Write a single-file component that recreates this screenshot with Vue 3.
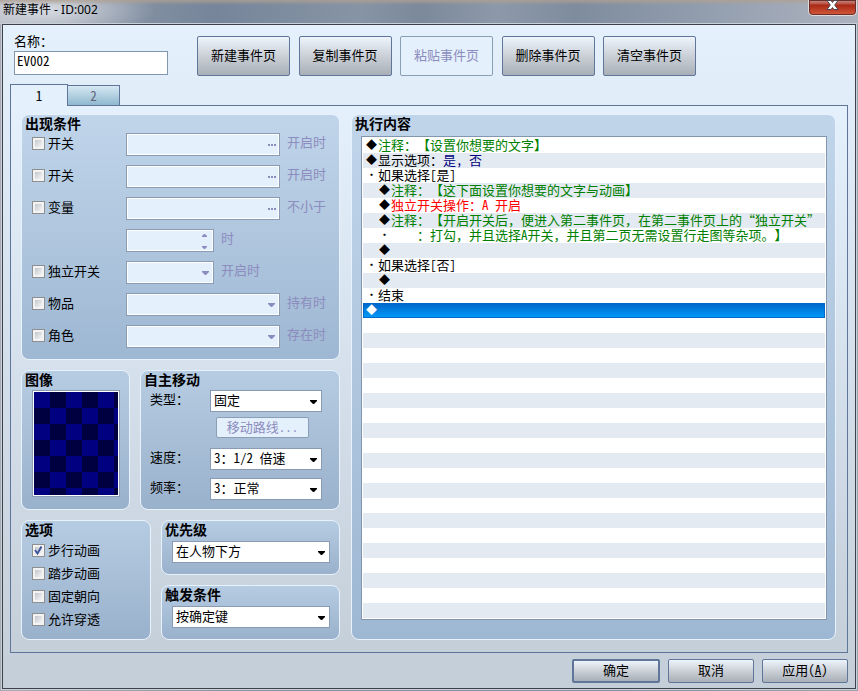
<script setup>
import { reactive, ref } from 'vue'

const eventName = ref('EV002')
const pageActions = [
  { label: '新建事件页' },
  { label: '复制事件页' },
  { label: '粘贴事件页', disabled: true },
  { label: '删除事件页' },
  { label: '清空事件页' },
]
const tabs = [1, 2]
const activeTab = ref(1)

const conditions = reactive([
  { id: 'switch-1', label: '开关', kind: 'picker', suffix: '开启时', on: false },
  { id: 'switch-2', label: '开关', kind: 'picker', suffix: '开启时', on: false },
  { id: 'variable', label: '变量', kind: 'picker', suffix: '不小于', on: false },
  { id: 'variable-value', kind: 'spin', suffix: '时', short: true },
  { id: 'self-switch', label: '独立开关', kind: 'select', suffix: '开启时', short: true, on: false },
  { id: 'item', label: '物品', kind: 'select', suffix: '持有时', on: false },
  { id: 'actor', label: '角色', kind: 'select', suffix: '存在时', on: false },
])

const options = reactive([
  { id: 'walk', label: '步行动画', on: true },
  { id: 'step', label: '踏步动画', on: false },
  { id: 'fix', label: '固定朝向', on: false },
  { id: 'through', label: '允许穿透', on: false },
])

const commands = [
  { mark: '◆', depth: 0, parts: [['green', '注释：【设置你想要的文字】']] },
  { mark: '◆', depth: 0, parts: [['black', '显示选项：'], ['navy half', '是, 否']] },
  { mark: '・', depth: 0, parts: [['half', '如果选择[是]']] },
  { mark: '◆', depth: 1, parts: [['green', '注释：【这下面设置你想要的文字与动画】']] },
  { mark: '◆', depth: 1, parts: [['red', '独立开关操作：'], ['red half', 'A 开启']] },
  { mark: '◆', depth: 1, parts: [['green', '注释：【开启开关后，便进入第二事件页，在第二事件页上的“独立开关”']] },
  { mark: '・', depth: 1, parts: [['green', '\u3000\u3000：打勾，并且选择'], ['green half', 'A'], ['green', '开关，并且第二页无需设置行走图等杂项。】']] },
  { mark: '◆', depth: 1, parts: [] },
  { mark: '・', depth: 0, parts: [['half', '如果选择[否]']] },
  { mark: '◆', depth: 1, parts: [] },
  { mark: '・', depth: 0, parts: [['black', '结束']] },
  { mark: '◆', depth: 0, parts: [] },
]
const selected = ref(11)
</script>

<template>
  <div class="window" lang="zh-CN">
    <header class="titlebar">
      <h1>新建事件 - ID:002</h1>
      <button class="close" type="button" aria-label="关闭">
        <svg width="13" height="11" viewBox="0 0 13 11">
          <path d="M1 0.5H5L6.500 2.500L8 0.5H12L8.700 5L12 9.500H8L6.500 7.500L5 9.500H1L4.300 5Z" fill="#fff" stroke="#4d4350" stroke-width="1" />
        </svg>
      </button>
    </header>

    <main class="client">
      <div class="top">
        <div class="name">
          <label for="event-name">名称：</label>
          <input id="event-name" v-model="eventName" type="text" />
        </div>
        <div class="actions">
          <button v-for="a in pageActions" :key="a.label" type="button" class="btn tall" :disabled="a.disabled">{{ a.label }}</button>
        </div>
      </div>

      <div class="tabs" role="tablist">
        <button
          v-for="t in tabs" :key="t" type="button" role="tab" class="tab"
          :class="{ active: t === activeTab }" :aria-selected="t === activeTab" @click="activeTab = t"
        >{{ t }}</button>
      </div>

      <div class="page">
        <div class="left">
          <section class="group conditions">
            <h2>出现条件</h2>
            <div class="rows">
              <div v-for="c in conditions" :key="c.id" class="row">
                <label v-if="c.label" class="check">
                  <span class="box">
                    <input v-model="c.on" type="checkbox" />
                    <svg v-if="c.on" width="13" height="13" viewBox="0 0 13 13"><path d="M3 6L5.5 9.5L9.5 2.5" fill="none" stroke="#3f569c" stroke-width="2" /></svg>
                  </span>
                  <span class="caption">{{ c.label }}</span>
                </label>
                <span v-else></span>
                <div class="value">
                  <span class="field" :class="{ short: c.short }">
                    <select v-if="c.kind === 'select'" :aria-label="c.label" disabled></select>
                    <input v-else type="text" :aria-label="c.label || '变量值'" disabled />
                    <svg v-if="c.kind === 'select'" class="arrow" width="7" height="4" viewBox="0 0 7 4"><path d="M0 0H7V1L4 4H3L0 1Z" /></svg>
                    <svg v-else-if="c.kind === 'picker'" class="dots" width="8" height="2" viewBox="0 0 8 2"><path d="M0 0H2V2H0ZM3 0H5V2H3ZM6 0H8V2H6Z" /></svg>
                    <svg v-else class="spin" width="5" height="15" viewBox="0 0 5 15"><path d="M0 3V2L2 0H3L5 2V3ZM0 12H5V13L3 15H2L0 13Z" /></svg>
                  </span>
                  <span class="suffix">{{ c.suffix }}</span>
                </div>
              </div>
            </div>
          </section>

          <div class="pair">
            <section class="group image">
              <h2>图像</h2>
              <button type="button" class="sprite" aria-label="图像"></button>
            </section>
            <section class="group movement">
              <h2>自主移动</h2>
              <div class="move-grid">
                <label for="move-type">类型：</label>
                <span class="field">
                  <select id="move-type"><option>固定</option></select>
                  <svg class="arrow" width="7" height="4" viewBox="0 0 7 4"><path d="M0 0H7V1L4 4H3L0 1Z" /></svg>
                </span>
                <button type="button" class="btn route" disabled>移动路线...</button>
                <label for="move-speed">速度：</label>
                <span class="field">
                  <select id="move-speed"><option>3：1/2 倍速</option></select>
                  <svg class="arrow" width="7" height="4" viewBox="0 0 7 4"><path d="M0 0H7V1L4 4H3L0 1Z" /></svg>
                </span>
                <label for="move-freq">频率：</label>
                <span class="field">
                  <select id="move-freq"><option>3：正常</option></select>
                  <svg class="arrow" width="7" height="4" viewBox="0 0 7 4"><path d="M0 0H7V1L4 4H3L0 1Z" /></svg>
                </span>
              </div>
            </section>
          </div>

          <div class="pair">
            <section class="group options">
              <h2>选项</h2>
              <div class="option-list">
                <label v-for="o in options" :key="o.id" class="check">
                  <span class="box">
                    <input v-model="o.on" type="checkbox" />
                    <svg v-if="o.on" width="13" height="13" viewBox="0 0 13 13"><path d="M3 6L5.5 9.5L9.5 2.5" fill="none" stroke="#3f569c" stroke-width="2" /></svg>
                  </span>
                  <span class="caption">{{ o.label }}</span>
                </label>
              </div>
            </section>
            <div class="stack">
              <section class="group single">
                <h2 id="priority">优先级</h2>
                <span class="field">
                  <select aria-labelledby="priority"><option>在人物下方</option></select>
                  <svg class="arrow" width="7" height="4" viewBox="0 0 7 4"><path d="M0 0H7V1L4 4H3L0 1Z" /></svg>
                </span>
              </section>
              <section class="group single">
                <h2 id="trigger">触发条件</h2>
                <span class="field">
                  <select aria-labelledby="trigger"><option>按确定键</option></select>
                  <svg class="arrow" width="7" height="4" viewBox="0 0 7 4"><path d="M0 0H7V1L4 4H3L0 1Z" /></svg>
                </span>
              </section>
            </div>
          </div>
        </div>

        <section class="group contents">
          <h2 id="contents">执行内容</h2>
          <div class="listbox">
            <ul role="listbox" aria-labelledby="contents" tabindex="0">
              <li
                v-for="(c, i) in commands" :key="i" role="option" :aria-selected="i === selected"
                :class="{ nested: c.depth, selected: i === selected }" @click="selected = i"
              ><span class="mark">{{ c.mark }}</span><span v-for="(p, j) in c.parts" :key="j" :class="p[0]">{{ p[1] }}</span></li>
            </ul>
          </div>
        </section>
      </div>

      <footer>
        <button type="button" class="btn default">确定</button>
        <button type="button" class="btn">取消</button>
        <button type="button" class="btn">应用(<u>A</u>)</button>
      </footer>
    </main>
  </div>
</template>

<style>
body {
  margin: 0;
}
</style>

<style scoped>
.window,
.window * {
  box-sizing: border-box;
}
.window {
  min-height: 100vh;
  display: flex;
  flex-direction: column;
  padding: 0 2px 2px;
  background: linear-gradient(90deg, #a9abb3, #8793a3 30%, #8491a3 70%, #9aa1ac);
  color: #000;
  font: 13px/15px "Noto Sans CJK SC", sans-serif;
  font-feature-settings: "hwid";
  text-spacing-trim: space-all;
}
button,
input,
select {
  font: inherit;
  font-feature-settings: inherit;
  color: inherit;
  margin: 0;
  border-radius: 0;
}
h1,
h2,
ul {
  margin: 0;
  padding: 0;
}
.titlebar {
  height: 24px;
  margin: 0 -2px;
  padding-left: 3px;
  display: flex;
  align-items: flex-start;
  justify-content: space-between;
  background:
    linear-gradient(180deg, rgba(176, 160, 145, 0.8), rgba(176, 160, 145, 0) 5px),
    radial-gradient(ellipse 110px 30px at 45px 10px, rgba(222, 225, 231, 0.9), rgba(222, 225, 231, 0)),
    linear-gradient(90deg, #a9afba, #8390a2 16%, #76859a 25%, #8794a5 42%, #7c899b 49%, #8d99a9 58%, #7f8c9e 67%, #929eae 82%, #adb2bf);
}
h1 {
  font: 400 12px/19px "Noto Sans", "Noto Sans CJK SC", sans-serif;
  font-feature-settings: normal;
}
.close {
  width: 49px;
  height: 16px;
  margin-right: 1px;
  padding: 0;
  display: flex;
  align-items: flex-start;
  justify-content: center;
  border: 1px solid #e1d9dc;
  border-top: 0;
  border-radius: 0 0 5px 5px;
  background: linear-gradient(180deg, #c79087, #b95143 4px, #a92814 5px, #d35a3c);
  box-shadow: inset 0 0 0 1px #682e2b;
}
.client {
  flex: 1;
  display: flex;
  flex-direction: column;
  padding: 11px 7px 5px;
  border: 1px solid #3d424a;
  box-shadow: 0 0 0 1px #c8d0da;
  background: linear-gradient(180deg, #e4f0fc, #c3ced9);
}
.top {
  display: flex;
  gap: 29px;
  padding-left: 4px;
}
.name {
  width: 154px;
  display: flex;
  flex-direction: column;
}
.name label {
  line-height: 10px;
  padding-bottom: 5px;
}
.name input {
  width: 100%;
  height: 24px;
  padding: 0 2px 5px;
  border: 1px solid #8396b0;
  background: #fff;
}
.actions {
  width: 499px;
  display: flex;
  justify-content: space-between;
}
.btn {
  padding: 0 0 3px;
  border: 1px solid #60759a;
  border-radius: 2px;
  background: linear-gradient(180deg, #edf4fb, #cbd0d7 50%, #a8afb6);
}
.btn:disabled {
  border-color: #8a9fb6;
  background: #e4f0fc;
  color: #8c8cbe;
}
.tall {
  width: 93px;
  height: 40px;
}
.tabs {
  display: flex;
  align-items: flex-end;
  margin-top: 8px;
}
.tab {
  width: 53px;
  height: 20px;
  padding: 0;
  margin-left: -1px;
  border: 1px solid #60759a;
  border-bottom: 0;
  background: linear-gradient(180deg, #d6e8f3, #8fb8cf);
  color: #63637c;
}
.tab.active {
  width: 58px;
  height: 22px;
  margin: 0 0 -1px;
  z-index: 1;
  background: #e4f0fc;
  color: #000;
}
.page {
  flex: 1;
  display: flex;
  gap: 11px;
  padding: 8px 11px 12px 10px;
  border: 1px solid #60759a;
  background: linear-gradient(180deg, #e4f0fc, #c4cfda);
}
.left {
  width: 319px;
  display: flex;
  flex-direction: column;
  gap: 10px;
}
.group {
  border: 1px solid #e7f2fc;
  border-radius: 8px;
  background: linear-gradient(180deg, #b6cce2, #9ab1cc);
}
.conditions,
.contents {
  background: linear-gradient(180deg, #c0d5ea, #9eb7d2);
}
h2 {
  padding: 0 3px 2px;
  font-size: 14px;
  line-height: 16px;
  font-weight: 700;
}
.rows {
  display: flex;
  flex-direction: column;
  gap: 9px;
  padding: 0 9px 11px 10px;
}
.row {
  display: grid;
  grid-template-columns: 94px 1fr;
}
.check {
  display: flex;
  align-items: center;
  gap: 3px;
}
.row .check {
  padding-bottom: 2px;
}
.caption {
  line-height: 13px;
  padding-bottom: 2px;
}
.box {
  position: relative;
  width: 13px;
  height: 13px;
}
.box input {
  display: block;
  appearance: none;
  width: 13px;
  height: 13px;
  border: 1px solid #8d8f90;
  background: linear-gradient(135deg, #b4bac2, #f4f4f4 80%);
  box-shadow: inset 0 0 0 2px #f3f3f3;
}
.box svg {
  position: absolute;
  inset: 0;
  pointer-events: none;
}
.value {
  display: flex;
  gap: 7px;
}
.suffix {
  line-height: 17px;
  color: #8c8cbe;
}
.field {
  position: relative;
  display: block;
  height: 22px;
}
.value .field {
  width: 154px;
  height: 23px;
}
.value .short {
  width: 88px;
}
.field select,
.field input {
  display: block;
  appearance: none;
  width: 100%;
  height: 100%;
  padding: 0 14px 4px 3px;
  border: 1px solid #8a9cb5;
  background: #fff;
  opacity: 1;
}
.field select:disabled,
.field input:disabled {
  background: #e4f0fc;
  box-shadow: inset 0 0 0 1px #fff;
}
.field svg {
  position: absolute;
  pointer-events: none;
}
.value svg {
  fill: #8c8cbe;
}
.arrow {
  right: 5px;
  top: 10px;
}
.dots {
  right: 4px;
  top: 11px;
}
.spin {
  right: 7px;
  top: 5px;
}
.pair {
  display: flex;
  gap: 10px;
}
.image {
  width: 109px;
}
.sprite {
  display: block;
  width: 88px;
  height: 107px;
  margin: 1px 0 12px 10px;
  padding: 0;
  border: 1px solid #8a9cb5;
  background: repeating-conic-gradient(#000040 0 25%, #000080 0 50%) 1px 1px / 32px 32px;
  box-shadow: inset 0 0 0 1px #fff;
}
.movement {
  flex: 1;
}
.move-grid {
  display: grid;
  grid-template-columns: 60px 112px;
  grid-template-rows: 22px 26px 25px 22px;
  row-gap: 5px;
  padding: 1px 0 0 9px;
}
.move-grid label {
  line-height: 17px;
}
.route {
  grid-column: 2;
  width: 93px;
  height: 21px;
  margin: 0 0 0 6px;
}
.options {
  width: 130px;
}
.option-list {
  display: flex;
  flex-direction: column;
  gap: 8px;
  padding: 4px 9px 0 10px;
}
.stack {
  flex: 1;
  display: flex;
  flex-direction: column;
  gap: 10px;
}
.single {
  height: 55px;
}
.single h2 {
  margin-bottom: 2px;
}
.single .field {
  margin: 0 9px 0 10px;
}
.contents {
  flex: 1;
  min-width: 0;
  display: flex;
  flex-direction: column;
  padding: 0 8px 19px 9px;
}
.contents h2 {
  margin: 0 0 3px -9px;
}
.listbox {
  flex: 1;
  display: flex;
  padding: 1px;
  border: 1px solid #8396b0;
  background: #fff;
}
ul {
  flex: 1;
  min-width: 0;
  list-style: none;
  outline: 0;
  font-feature-settings: normal;
  background: repeating-linear-gradient(180deg, #fff 0 15px, #e4eaf1 15px 30px);
}
li {
  display: flex;
  align-items: center;
  height: 15px;
  padding: 0 0 2px 2px;
  line-height: 13px;
  white-space: pre;
}
.nested {
  padding-left: 15px;
}
.mark {
  width: 13px;
  font-size: 11px;
  text-align: center;
}
.half {
  font-feature-settings: "hwid";
}
.selected {
  color: #fff;
  background: linear-gradient(180deg, #0064c8, #009cfa);
  box-shadow: inset 0 0 0 1px #0067cb;
}
.green {
  color: #008000;
}
.navy {
  color: #000080;
}
.red {
  color: #f00;
}
footer {
  display: flex;
  justify-content: flex-end;
  gap: 8px;
  padding-top: 6px;
}
footer .btn {
  width: 86px;
  height: 24px;
}
footer .default {
  width: 88px;
  border-width: 2px;
}
</style>
